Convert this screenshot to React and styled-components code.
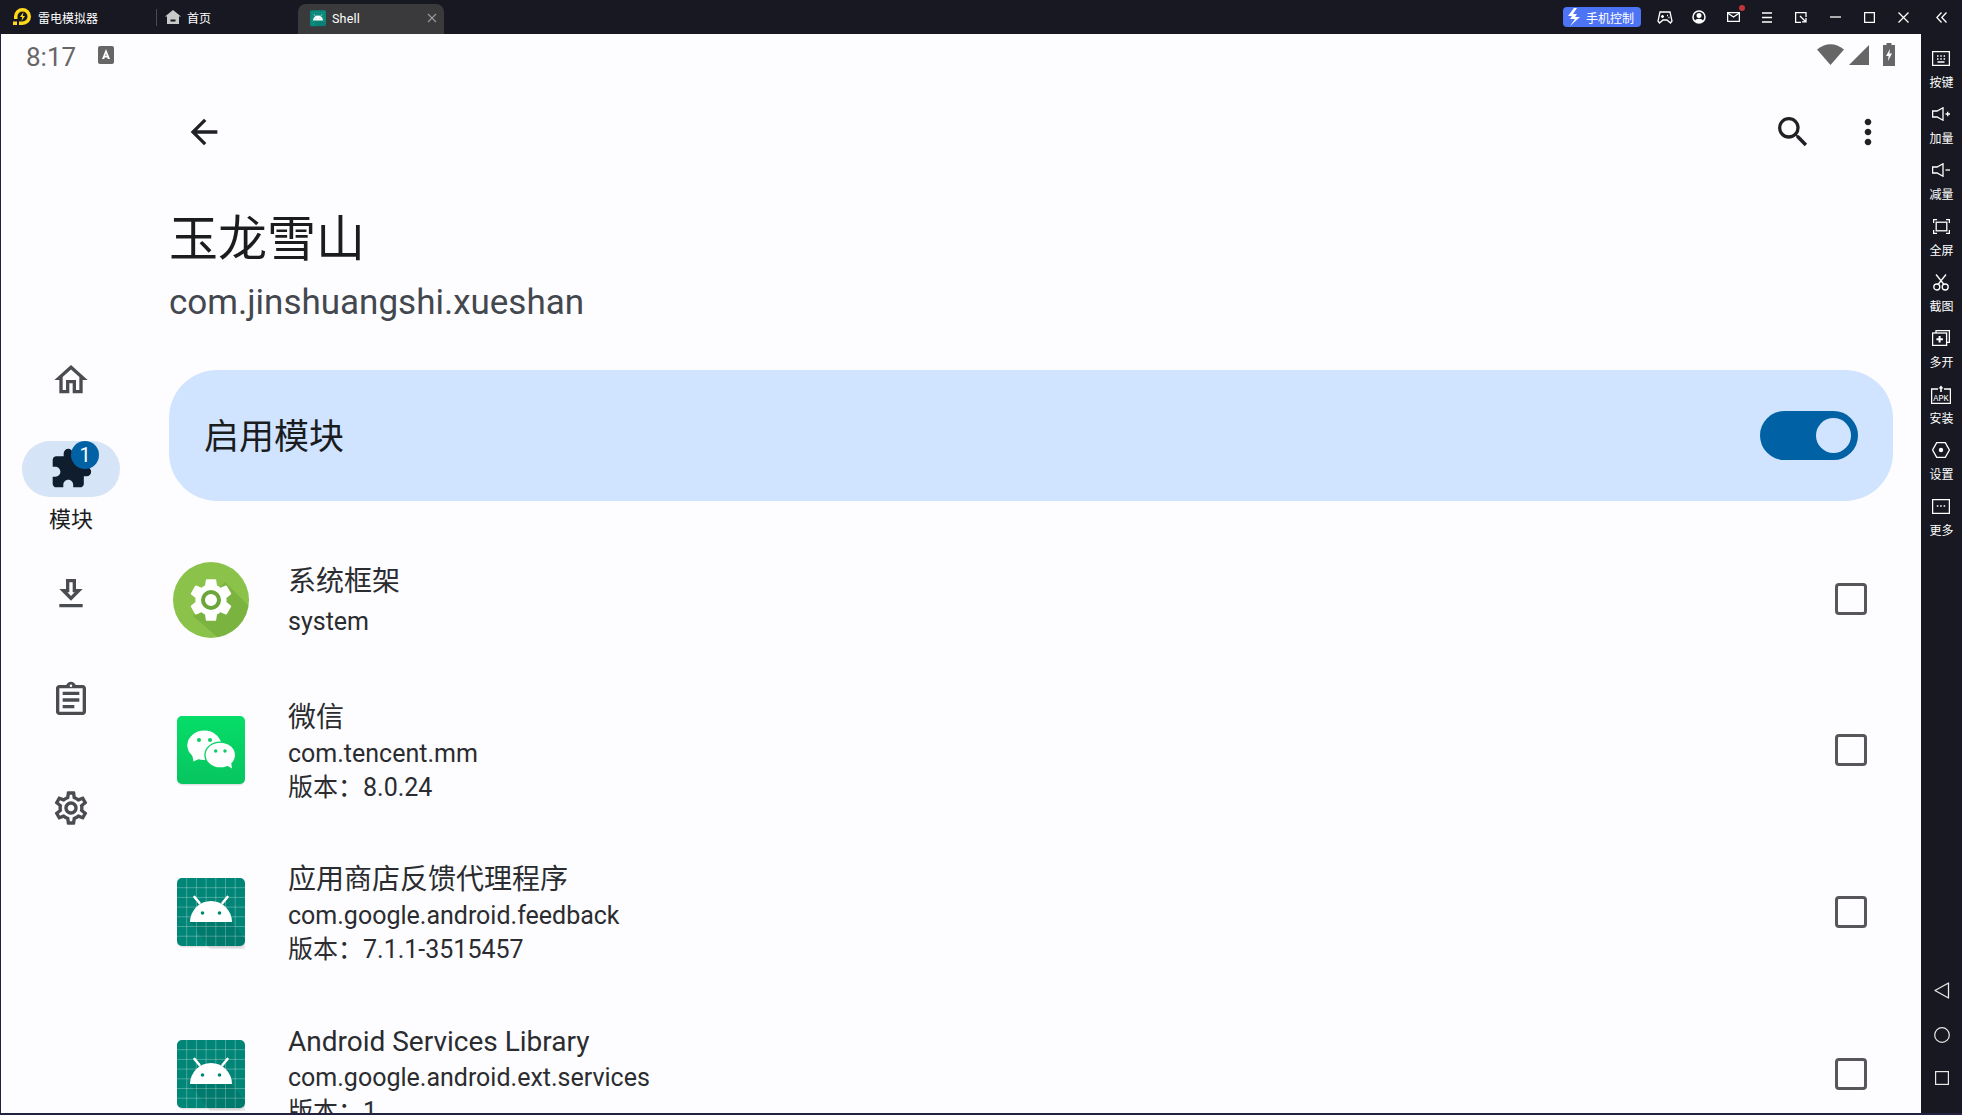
import React from 'react'
import styled, { createGlobalStyle } from 'styled-components'
import {
  MdArrowBack, MdSearch, MdMoreVert, MdOutlineHome, MdExtension,
  MdOutlineGetApp, MdOutlineAssignment, MdOutlineSettings, MdSettings,
} from 'react-icons/md'

const GlobalStyle = createGlobalStyle`
  html, body { margin: 0; padding: 0; background: #171821; }
  * { box-sizing: border-box; }
  body { font-family: Roboto, "Noto Sans CJK SC", sans-serif; }
`

const Frame = styled.div`
  width: 1962px;
  height: 1115px;
  display: flex;
  flex-direction: column;
  overflow: hidden;
  background: #171821;
  border-bottom: 2px solid #22223e;
`

/* window title bar */
const TitleBar = styled.header`
  height: 34px;
  flex: none;
  display: flex;
  align-items: center;
  color: #fff;
  font-family: "Noto Sans CJK SC", sans-serif;
  font-size: 12px;
`
const Brand = styled.div`
  width: 156px;
  padding-left: 13px;
  display: flex;
  align-items: center;
  gap: 7px;
`
const HomeTab = styled.div`
  width: 137px;
  height: 17px;
  border-left: 1px solid #4a4b52;
  padding-left: 8px;
  display: flex;
  align-items: center;
  gap: 6px;
`
const ShellTab = styled.div`
  margin: 4px 0 0 5px;
  width: 146px;
  height: 30px;
  background: #3a3a3c;
  border-radius: 8px 8px 0 0;
  padding: 0 4px 2px 12px;
  display: flex;
  align-items: center;
  gap: 6px;
  font-family: Roboto, sans-serif;
  font-size: 12.5px;
  letter-spacing: 0.2px;
`
const TabClose = styled.span`
  margin-left: auto;
  display: flex;
  margin-right: 1px;
`
const TitleActions = styled.div`
  margin-left: auto;
  display: flex;
  align-items: center;
`
const PhoneControl = styled.div`
  width: 78px;
  height: 20px;
  margin-right: 7px;
  background: #4e74f6;
  border-radius: 4px;
  padding-left: 3px;
  display: flex;
  align-items: center;
  gap: 4px;
`
const WinButton = styled.span`
  width: 34px;
  height: 34px;
  display: flex;
  align-items: center;
  justify-content: center;
  position: relative;
`
const CollapseButton = styled(WinButton)`
  width: 41px;
  margin-left: 1px;
`
const Dot = styled.i`
  position: absolute;
  top: 5px;
  right: 5px;
  width: 6px;
  height: 6px;
  border-radius: 50%;
  background: #c4343b;
`

/* emulator body */
const Body = styled.div`
  flex: 1;
  min-height: 0;
  display: flex;
`
const Screen = styled.div`
  flex: 1;
  min-width: 0;
  display: flex;
  flex-direction: column;
  background: #fdfcff;
  border-left: 1px solid #22223e;
`
const StatusBar = styled.div`
  height: 40px;
  flex: none;
  padding: 2px 26px 0 25px;
  display: flex;
  align-items: center;
  color: #666;
`
const Clock = styled.span`
  font-size: 26px;
  width: 72px;
  margin-top: 3px;
`
const StatusIcons = styled.div`
  margin: -2px 0 0 auto;
  display: flex;
  align-items: center;
`
const AppArea = styled.div`
  flex: 1;
  min-height: 0;
  display: flex;
  overflow: hidden;
`

/* navigation rail */
const Rail = styled.nav`
  width: 140px;
  flex: none;
  padding-top: 278px;
  display: flex;
  flex-direction: column;
  align-items: center;
`
const RailItem = styled.div`
  height: ${p => p.$h}px;
  flex: none;
  display: flex;
  flex-direction: column;
  align-items: center;
  color: #43474e;
`
const RailPill = styled.div`
  width: 98px;
  height: 56px;
  border-radius: 28px;
  position: relative;
  display: flex;
  align-items: center;
  justify-content: center;
  background: ${p => (p.$active ? '#d6e4f7' : 'transparent')};
  color: ${p => (p.$active ? '#0f1d2e' : '#4a4c50')};
`
const Badge = styled.span`
  position: absolute;
  top: 0;
  left: 49px;
  width: 28px;
  height: 28px;
  border-radius: 50%;
  background: #0061a4;
  color: #fff;
  font-size: 20px;
  line-height: 28px;
  text-align: center;
`
const RailLabel = styled.div`
  margin-top: 9px;
  font-size: 22px;
  line-height: 28px;
  font-weight: 400;
  color: #1a1c1e;
`

/* module page */
const Content = styled.main`
  flex: 1;
  min-width: 0;
  padding: 0 28px 0 28px;
`
const Toolbar = styled.div`
  height: 114px;
  padding: 2px 0 0 15px;
  display: flex;
  align-items: center;
  color: #1f2124;
`
const ToolbarRight = styled.div`
  margin-left: auto;
  display: flex;
  gap: 35px;
  padding-right: 5px;
`
const Heading = styled.h1`
  margin: 7px 0 0;
  font-size: 49px;
  line-height: 89px;
  font-weight: 400;
  color: #1a1c1e;
`
const PackageName = styled.div`
  font-size: 35px;
  line-height: 36px;
  color: #43474e;
  margin: 1px 0 49px;
`
const EnableCard = styled.section`
  height: 131px;
  border-radius: 48px;
  background: #d1e4ff;
  padding: 0 35px 4px 35px;
  display: flex;
  align-items: center;
  justify-content: space-between;
  font-size: 35px;
  color: #1a1c1e;
  margin-bottom: 29px;
`
const Switch = styled.div`
  width: 98px;
  height: 49px;
  margin-top: 4px;
  border-radius: 25px;
  background: #0061a4;
  display: flex;
  align-items: center;
  justify-content: flex-end;
  padding-right: 7px;
`
const Thumb = styled.div`
  width: 35px;
  height: 35px;
  border-radius: 50%;
  background: #d1e4ff;
`
const ModuleRow = styled.div`
  height: ${p => p.$h}px;
  flex: none;
  padding: 0 26px 0 4px;
  display: flex;
  align-items: center;
`
const IconSlot = styled.div`
  width: 76px;
  flex: none;
  display: flex;
  justify-content: center;
  margin-right: 39px;
`
const RowText = styled.div`
  flex: 1;
  min-width: 0;
`
const RowTitle = styled.div`
  padding-top: 2px;
  font-size: 28px;
  line-height: 38px;
  color: #2a2c2f;
`
const RowSub = styled.div`
  font-size: 25px;
  line-height: 34px;
  color: #2a2c2f;
  margin-top: ${p => (p.$single ? 4 : 0)}px;
`
const Checkbox = styled.div`
  width: 32px;
  height: 32px;
  flex: none;
  margin-bottom: 2px;
  border: 3px solid #55575b;
  border-radius: 4px;
`

/* emulator side toolbar */
const SideBar = styled.aside`
  width: 41px;
  flex: none;
  display: flex;
  flex-direction: column;
  align-items: center;
  padding-top: 11px;
  color: #fff;
  font-family: "Noto Sans CJK SC", sans-serif;
`
const SideItem = styled.div`
  height: 56px;
  display: flex;
  flex-direction: column;
  align-items: center;
  padding-top: 3px;
  font-size: 12px;
  line-height: 18px;
`
const SideIcon = styled.div`
  height: 20px;
  margin-bottom: 5px;
  display: flex;
  align-items: center;
`
const SoftKeys = styled.div`
  margin-top: auto;
  padding-bottom: 28px;
  display: flex;
  flex-direction: column;
  align-items: center;
  gap: 28px;
`

const line = { fill: 'none', stroke: '#fff', strokeWidth: 1.3 }

const Logo = () => (
  <svg width="18" height="18" viewBox="0 0 18 18">
    <path d="M9.500 0a8.500 8.500 0 0 1 0 17H6v-3.500h3.500a5 5 0 1 0-5-5V11H1V8.500A8.500 8.500 0 0 1 9.500 0z" fill="#ffd91a" />
    <path d="M10.500 4L7 9h2.300L8.500 13l3.500-5H9.700z" fill="#ffd91a" />
    <rect x="0" y="13.500" width="4" height="3.500" fill="#ffd91a" />
  </svg>
)
const HomeGlyph = () => (
  <svg width="16" height="14" viewBox="0 0 16 14">
    <path d="M8 0l8 6.500h-2V14H2V6.500H0z" fill="#c9c9c9" />
    <rect x="5.500" y="9.500" width="5" height="2" fill="#17181f" />
  </svg>
)
const AndroidIcon = ({ size = 68, shadow }) => {
  const grid = [1, 2, 3, 4, 5, 6]
  return (
    <svg width={size} height={size + 3} viewBox="0 0 68 71">
      {shadow && <rect x="0.500" y="1.500" width="67" height="68" rx="5" fill="#000" opacity="0.1" />}
      <rect width="68" height="68" rx="5" fill="#008577" />
      {grid.map(i => (
        <g key={i} stroke="#fff" strokeOpacity="0.28" strokeWidth="1">
          <path d={`M${i * 9.7} 0V68`} />
          <path d={`M0 ${i * 9.7}H68`} />
        </g>
      ))}
      <path d="M13 44h42l20 27H33z" fill="#000" opacity="0.08" />
      <path d="M13 44a21 21 0 0 1 42 0z" fill="#fff" />
      <path d="M17.500 19l5 6M50.500 19l-5 6" stroke="#fff" strokeWidth="2.600" strokeLinecap="round" />
      <circle cx="25.500" cy="35" r="1.800" fill="#008577" />
      <circle cx="42.500" cy="35" r="1.800" fill="#008577" />
    </svg>
  )
}
const WeChatIcon = () => (
  <svg width="68" height="71" viewBox="0 0 68 71">
    <defs>
      <linearGradient id="wx" x1="0" y1="0" x2="0" y2="1">
        <stop offset="0" stopColor="#06dd68" />
        <stop offset="1" stopColor="#07c560" />
      </linearGradient>
    </defs>
    <rect x="0.500" y="1.500" width="67" height="68" rx="5" fill="#000" opacity="0.1" />
    <rect width="68" height="68" rx="5" fill="url(#wx)" />
    <ellipse cx="27.300" cy="29.300" rx="17" ry="14.700" fill="#fff" />
    <path d="M15 38l1.500 7.500L24 42z" fill="#fff" />
    <ellipse cx="43.300" cy="39" rx="16" ry="13.600" fill="#06d063" />
    <ellipse cx="43.300" cy="39" rx="14.700" ry="12.300" fill="#fff" />
    <path d="M49 49l6 3.500-1-7z" fill="#fff" />
    <circle cx="22" cy="24" r="2" fill="#07cf63" />
    <circle cx="33" cy="24" r="2" fill="#07cf63" />
    <circle cx="38.700" cy="35" r="1.700" fill="#07cf63" />
    <circle cx="48" cy="35" r="1.700" fill="#07cf63" />
  </svg>
)
const SystemIcon = () => (
  <svg width="76" height="76" viewBox="0 0 76 76">
    <defs>
      <clipPath id="disc"><circle cx="38" cy="38" r="38" /></clipPath>
    </defs>
    <circle cx="38" cy="38" r="38" fill="#8bc34a" />
    <path d="M20 54L52 20l30 30v30H50z" fill="#689f38" opacity="0.45" clipPath="url(#disc)" />
    <MdSettings x="12" y="12" size="52" color="#fff" />
    <circle cx="38" cy="38" r="12" fill="#fff" />
    <circle cx="38" cy="38" r="8" fill="none" stroke="#6aa63c" strokeWidth="4" />
  </svg>
)

const sideItems = [
  ['按键', <svg width="18" height="15" viewBox="0 0 18 15"><rect x=".6" y=".6" width="16.800" height="13.800" {...line} /><path d="M5 5h1.500M8.300 5h1.500M11.600 5h1.500M5 8h1.500M8.300 8h1.500M11.600 8h1.500M5.500 11h7" {...line} /></svg>],
  ['加量', <svg width="18" height="14" viewBox="0 0 18 14"><path d="M.6 4h4.500L11 .8v12.400L5.100 10H.6z" {...line} /><path d="M13.500 7h4.500M15.700 4.800v4.400" {...line} /></svg>],
  ['减量', <svg width="18" height="14" viewBox="0 0 18 14"><path d="M.6 4h4.500L11 .8v12.400L5.100 10H.6z" {...line} /><path d="M13.500 7h4.500" {...line} /></svg>],
  ['全屏', <svg width="17" height="15" viewBox="0 0 17 15"><path d="M.6 4V.6h3.500M13 .6h3.400V4M16.400 11v3.400H13M4 14.400H.6V11" {...line} /><rect x="3.200" y="3.200" width="10.600" height="8.600" {...line} /></svg>],
  ['截图', <svg width="16" height="17" viewBox="0 0 16 17"><circle cx="3.800" cy="13" r="3" {...line} /><circle cx="12.200" cy="13" r="3" {...line} /><path d="M5 10.500L13 .5M11 10.500L3 .5" {...line} /></svg>],
  ['多开', <svg width="18" height="16" viewBox="0 0 18 16"><rect x=".6" y="3" width="14" height="12.400" {...line} /><path d="M4 3V.6h13.400v11.800H14.600" {...line} /><path d="M7.600 6v6.500M4.400 9.200h6.500" stroke="#fff" strokeWidth="2" /></svg>],
  ['安装', <svg width="20" height="19" viewBox="0 0 20 19"><path d="M7 4H.6v14.400h18.800V4H13" {...line} /><path d="M10 .5L7.500 3.500h1.700V7h1.600V3.500h1.700z" fill="#fff" /><text x="10" y="15.500" textAnchor="middle" fontSize="8.500" fill="#fff" fontFamily="Liberation Mono, monospace">APK</text></svg>],
  ['设置', <svg width="18" height="16" viewBox="0 0 18 16"><path d="M4.700.6h8.600L17.400 8l-4.100 7.400H4.700L.6 8z" {...line} /><circle cx="9" cy="8" r="2.200" fill="#fff" /></svg>],
  ['更多', <svg width="18" height="15" viewBox="0 0 18 15"><rect x=".6" y=".6" width="16.800" height="13.800" {...line} /><path d="M4.800 7h1.600M8.200 7h1.600M11.600 7h1.600" stroke="#fff" strokeWidth="1.600" /></svg>],
]

const modules = [
  { h: 140, title: '系统框架', pkg: 'system', icon: <SystemIcon /> },
  { h: 162, title: '微信', pkg: 'com.tencent.mm', ver: '8.0.24', icon: <WeChatIcon /> },
  { h: 162, title: '应用商店反馈代理程序', pkg: 'com.google.android.feedback', ver: '7.1.1-3515457', icon: <AndroidIcon shadow /> },
  { h: 162, title: 'Android Services Library', pkg: 'com.google.android.ext.services', ver: '1', icon: <AndroidIcon shadow /> },
]

const App = () => (
  <Frame>
    <GlobalStyle />
    <TitleBar>
      <Brand><Logo />雷电模拟器</Brand>
      <HomeTab><HomeGlyph />首页</HomeTab>
      <ShellTab>
        <AndroidIcon size={16} />
        Shell
        <TabClose>
          <svg width="14" height="14" viewBox="0 0 14 14"><path d="M3 3l8 8M11 3l-8 8" stroke="#9a9a9c" strokeWidth="1.100" /></svg>
        </TabClose>
      </ShellTab>
      <TitleActions>
        <PhoneControl>
          <svg width="16" height="18" viewBox="0 0 16 18"><path d="M8 0L2 8h4l-2 3h5l-5 7 10-9H9l2-3H7l4-6z" fill="#fff" /></svg>
          手机控制
        </PhoneControl>
        <WinButton><svg width="16" height="13" viewBox="0 0 16 13"><path d="M3 1h10l2 9-1.500 2L10 9H6l-3.500 3L1 10z" {...line} /><path d="M4 5.500h3M5.500 4v3M10 4.500h1M11.500 6.500h1" {...line} /></svg></WinButton>
        <WinButton><svg width="14" height="14" viewBox="0 0 14 14"><circle cx="7" cy="7" r="6" {...line} strokeWidth="1.500" /><circle cx="7" cy="5.500" r="2.500" fill="#fff" /><path d="M2.500 11a5 4 0 0 1 9 0 6 6 0 0 1-9 0z" fill="#fff" /></svg></WinButton>
        <WinButton>
          <svg width="13" height="10" viewBox="0 0 13 10"><rect x=".6" y=".6" width="11.800" height="8.800" {...line} /><path d="M.6 1l5.900 4 5.900-4" {...line} /></svg>
          <Dot />
        </WinButton>
        <WinButton><svg width="12" height="11" viewBox="0 0 12 11"><path d="M1 1h10M1 5.500h10M1 10h10" {...line} /></svg></WinButton>
        <WinButton><svg width="12" height="11" viewBox="0 0 12 11"><path d="M11 5V.6H.6v9.800H6" {...line} /><path d="M5 4l5.500 5.500M7 9.800h4V6" {...line} /></svg></WinButton>
        <WinButton><svg width="11" height="2" viewBox="0 0 11 2"><path d="M0 1h11" {...line} /></svg></WinButton>
        <WinButton><svg width="11" height="11" viewBox="0 0 11 11"><rect x=".6" y=".6" width="9.800" height="9.800" {...line} /></svg></WinButton>
        <WinButton><svg width="11" height="11" viewBox="0 0 11 11"><path d="M.5.500l10 10M10.500.500l-10 10" {...line} /></svg></WinButton>
        <CollapseButton><svg width="11" height="11" viewBox="0 0 11 11"><path d="M5.500.5L.8 5.500l4.700 5M10.500.5L5.800 5.500l4.700 5" {...line} /></svg></CollapseButton>
      </TitleActions>
    </TitleBar>

    <Body>
      <Screen>
        <StatusBar>
          <Clock>8:17</Clock>
          <svg width="16" height="18" viewBox="0 0 16 18">
            <rect width="16" height="18" rx="2" fill="#666" />
            <path d="M4 13L8 3l4 10h-2.200l-.5-1.600H6.700L6.200 13zM7.300 9.700h1.400L8 7.500z" fill="#fff" />
          </svg>
          <StatusIcons>
            <svg width="27" height="21" viewBox="0 0 27 21"><path d="M0 5.500Q13.500-5 27 5.500L13.500 21z" fill="#666" /></svg>
            <svg width="20" height="20" viewBox="0 0 20 20" style={{ margin: '2px 14px 0 5px' }}><path d="M20 0v20H0z" fill="#666" /></svg>
            <svg width="12" height="23" viewBox="0 0 12 23"><path d="M3.500 0h5v2H12v21H0V2h3.500z" fill="#666" /><path d="M7 6L3 13h2.600L5 18l4-7.500H6.400z" fill="#fff" /></svg>
          </StatusIcons>
        </StatusBar>

        <AppArea>
          <Rail>
            <RailItem $h={89}><RailPill><MdOutlineHome size={40} /></RailPill></RailItem>
            <RailItem $h={125}>
              <RailPill $active><MdExtension size={44} /><Badge>1</Badge></RailPill>
              <RailLabel>模块</RailLabel>
            </RailItem>
            <RailItem $h={106}><RailPill><MdOutlineGetApp size={40} /></RailPill></RailItem>
            <RailItem $h={108}><RailPill><MdOutlineAssignment size={40} /></RailPill></RailItem>
            <RailItem $h={56}><RailPill><MdOutlineSettings size={40} /></RailPill></RailItem>
          </Rail>

          <Content>
            <Toolbar>
              <MdArrowBack size={40} />
              <ToolbarRight>
                <MdSearch size={40} />
                <MdMoreVert size={40} />
              </ToolbarRight>
            </Toolbar>
            <Heading>玉龙雪山</Heading>
            <PackageName>com.jinshuangshi.xueshan</PackageName>
            <EnableCard>
              启用模块
              <Switch><Thumb /></Switch>
            </EnableCard>
            {modules.map(m => (
              <ModuleRow key={m.pkg} $h={m.h}>
                <IconSlot>{m.icon}</IconSlot>
                <RowText>
                  <RowTitle>{m.title}</RowTitle>
                  <RowSub $single={!m.ver}>{m.pkg}</RowSub>
                  {m.ver && <RowSub>版本：{m.ver}</RowSub>}
                </RowText>
                <Checkbox />
              </ModuleRow>
            ))}
          </Content>
        </AppArea>
      </Screen>

      <SideBar>
        {sideItems.map(([label, icon]) => (
          <SideItem key={label}>
            <SideIcon>{icon}</SideIcon>
            {label}
          </SideItem>
        ))}
        <SoftKeys>
          <svg width="16" height="17" viewBox="0 0 16 17"><path d="M14.500 1v15L1 8.500z" fill="none" stroke="#e8e8e8" strokeWidth="1.300" strokeLinejoin="round" /></svg>
          <svg width="16" height="16" viewBox="0 0 16 16"><circle cx="8" cy="8" r="7.300" fill="none" stroke="#e8e8e8" strokeWidth="1.200" /></svg>
          <svg width="14" height="14" viewBox="0 0 14 14"><rect x=".6" y=".6" width="12.800" height="12.800" fill="none" stroke="#e8e8e8" strokeWidth="1.200" /></svg>
        </SoftKeys>
      </SideBar>
    </Body>
  </Frame>
)

export default App
